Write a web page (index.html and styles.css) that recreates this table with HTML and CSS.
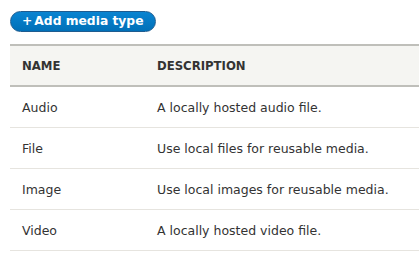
FILE: index.html
```html
<!DOCTYPE html>
<html lang="en">
<head>
    <meta charset="UTF-8">
    <title>Media types</title>
    <link rel="stylesheet" href="styles.css">
</head>
<body>
    <div class="page">
        <a class="button-action" href="#">+<span class="label">Add media type</span></a>
        <table class="media-types">
            <thead>
                <tr>
                    <th class="col-name">Name</th>
                    <th>Description</th>
                </tr>
            </thead>
            <tbody>
                <tr><td>Audio</td><td>A locally hosted audio file.</td></tr>
                <tr><td>File</td><td>Use local files for reusable media.</td></tr>
                <tr><td>Image</td><td>Use local images for reusable media.</td></tr>
                <tr><td>Video</td><td>A locally hosted video file.</td></tr>
            </tbody>
        </table>
    </div>
</body>
</html>
```

FILE: styles.css
```css
body {
    margin: 0;
    background: #fff;
    font-family: "DejaVu Sans", sans-serif;
    font-size: 12.5px;
    color: #333;
}
.page {
    padding: 11px 0 0 10px;
}
.button-action {
    display: inline-block;
    height: 21px;
    line-height: 19px;
    padding: 0 11px 0 11px;
    box-sizing: border-box;
    border: 1px solid #1e5c90;
    border-radius: 12px;
    background: linear-gradient(#0a84d1, #0070b8);
    color: #fff;
    font-weight: bold;
    font-size: 12.3px;
    text-decoration: none;
}
.button-action .label {
    margin-left: 2px;
}
.media-types {
    width: calc(100% + 10px);
    margin-top: 12px;
    border-collapse: collapse;
}
.media-types thead tr {
    background: #f5f5f2;
    border-top: 2px solid #bfbfba;
    border-bottom: 2px solid #bfbfba;
}
.media-types th {
    height: 39px;
    padding: 0 12px;
    text-align: left;
    text-transform: uppercase;
    font-size: 11.7px;
    font-weight: bold;
    color: #333;
}
.col-name {
    width: 111px;
}
.media-types td {
    height: 40px;
    padding: 0 12px;
    border-bottom: 1px solid #e6e4df;
}
```
